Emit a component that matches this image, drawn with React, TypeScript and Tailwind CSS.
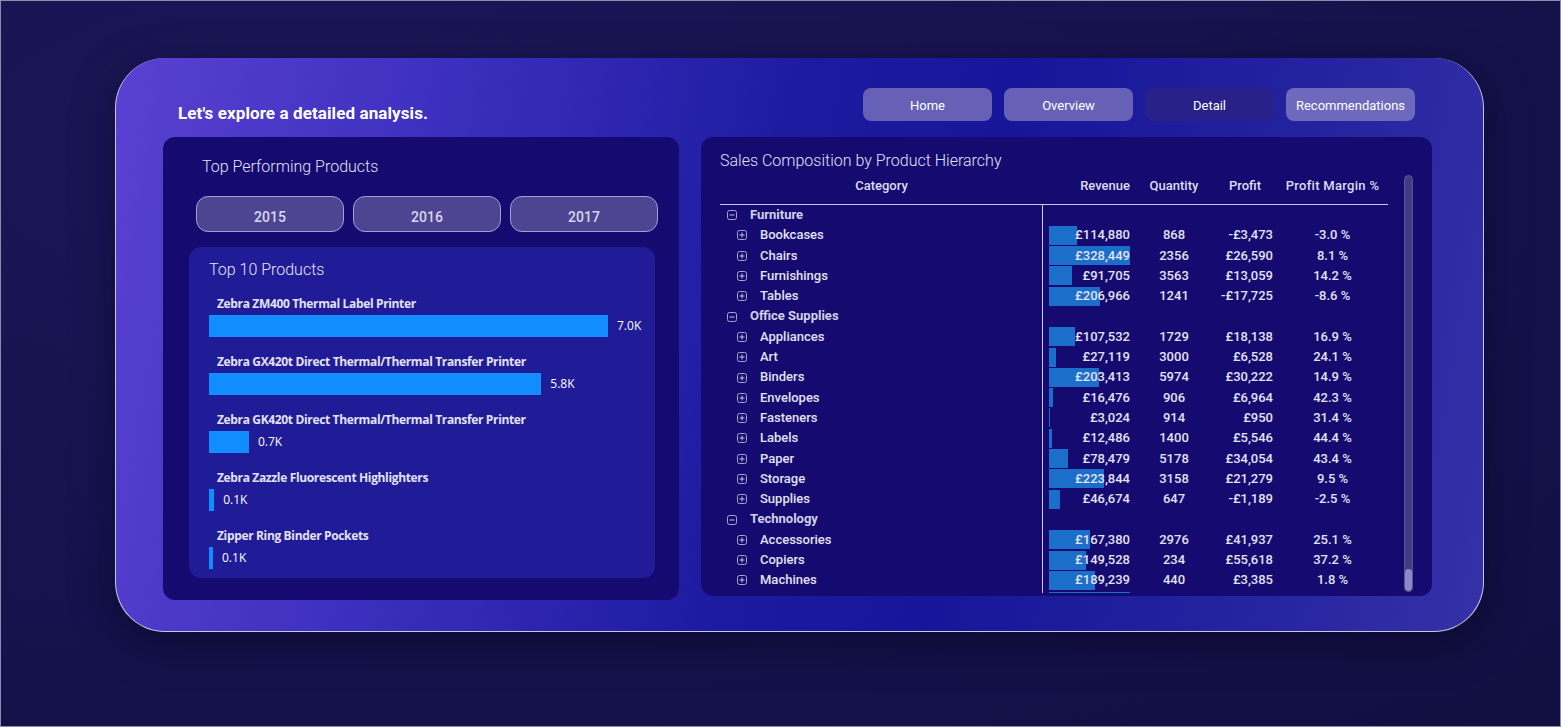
import React from 'react';

const NAV = ['Home', 'Overview', 'Detail', 'Recommendations'] as const;
const YEARS = ['2015', '2016', '2017'];

const TOP_PRODUCTS = [
  { name: 'Zebra ZM400 Thermal Label Printer', value: 7.0 },
  { name: 'Zebra GX420t Direct Thermal/Thermal Transfer Printer', value: 5.83 },
  { name: 'Zebra GK420t Direct Thermal/Thermal Transfer Printer', value: 0.7 },
  { name: 'Zebra Zazzle Fluorescent Highlighters', value: 0.09 },
  { name: 'Zipper Ring Binder Pockets', value: 0.07 }
];

type Row = { name: string; rev?: number; qty?: string; profit?: string; margin?: string; group?: boolean };

const ROWS: Row[] = [
  { name: 'Furniture', group: true },
  { name: 'Bookcases', rev: 114880, qty: '868', profit: '-£3,473', margin: '-3.0 %' },
  { name: 'Chairs', rev: 328449, qty: '2356', profit: '£26,590', margin: '8.1 %' },
  { name: 'Furnishings', rev: 91705, qty: '3563', profit: '£13,059', margin: '14.2 %' },
  { name: 'Tables', rev: 206966, qty: '1241', profit: '-£17,725', margin: '-8.6 %' },
  { name: 'Office Supplies', group: true },
  { name: 'Appliances', rev: 107532, qty: '1729', profit: '£18,138', margin: '16.9 %' },
  { name: 'Art', rev: 27119, qty: '3000', profit: '£6,528', margin: '24.1 %' },
  { name: 'Binders', rev: 203413, qty: '5974', profit: '£30,222', margin: '14.9 %' },
  { name: 'Envelopes', rev: 16476, qty: '906', profit: '£6,964', margin: '42.3 %' },
  { name: 'Fasteners', rev: 3024, qty: '914', profit: '£950', margin: '31.4 %' },
  { name: 'Labels', rev: 12486, qty: '1400', profit: '£5,546', margin: '44.4 %' },
  { name: 'Paper', rev: 78479, qty: '5178', profit: '£34,054', margin: '43.4 %' },
  { name: 'Storage', rev: 223844, qty: '3158', profit: '£21,279', margin: '9.5 %' },
  { name: 'Supplies', rev: 46674, qty: '647', profit: '-£1,189', margin: '-2.5 %' },
  { name: 'Technology', group: true },
  { name: 'Accessories', rev: 167380, qty: '2976', profit: '£41,937', margin: '25.1 %' },
  { name: 'Copiers', rev: 149528, qty: '234', profit: '£55,618', margin: '37.2 %' },
  { name: 'Machines', rev: 189239, qty: '440', profit: '£3,385', margin: '1.8 %' }
];

const REV_MAX = 330007;

function fmt(n: number): string {
  return '£' + n.toLocaleString('en-GB');
}

function ToggleBox({ open }: { open: boolean }) {
  return (
    <svg width="10" height="10" viewBox="0 0 10 10" fill="none" className="shrink-0">
      <rect x="0.5" y="0.5" width="9" height="9" rx="2" stroke="#a9a6cc" />
      <path d="M2.5 5h5" stroke="#c4c2de" />
      {!open && <path d="M5 2.5v5" stroke="#c4c2de" />}
    </svg>
  );
}

function TopProducts() {
  return (
    <section className="w-[516px] h-[463px] shrink-0 rounded-xl bg-[#150a70] flex flex-col">
      <h2 className="pl-[39px] pt-[19px] text-[16px] leading-[22px] font-light text-[#e2e1f2]">
        Top Performing Products
      </h2>
      <div className="mt-[18px] pl-[33px] flex gap-[9px]">
        {YEARS.map((y) => (
          <button
            key={y}
            className="w-[148px] h-[36px] rounded-xl border border-[#a39ed6] bg-[#4e4592] pt-[7px] text-[14px] font-medium text-[#d9d8ea]"
          >
            {y}
          </button>
        ))}
      </div>
      <div className="mt-[15px] ml-[26px] w-[466px] h-[331px] rounded-xl bg-[#201c98] pl-[20px]">
        <h3 className="pt-[12px] text-[16px] leading-[22px] font-light text-[#e6e5f4]">Top 10 Products</h3>
        <div className="mt-[15px] flex flex-col gap-[17px]">
          {TOP_PRODUCTS.map((p) => (
            <div key={p.name} className="flex flex-col gap-[3px]">
              <div className="pl-[8px] h-[16px] leading-[16px] text-[12px] font-bold tracking-[-0.35px] text-[#e3e2f2] font-['Open_Sans',sans-serif]">
                {p.name}
              </div>
              <div className="flex items-center h-[22px]">
                <div className="h-[22px] bg-[#118dff]" style={{ width: Math.max(4, (p.value / 7) * 399) }} />
                <span className="ml-[9px] text-[12px] text-white font-['Open_Sans',sans-serif]">
                  {p.value < 0.15 ? '0.1' : p.value.toFixed(1)}K
                </span>
              </div>
            </div>
          ))}
        </div>
      </div>
    </section>
  );
}

function HierarchyTable() {
  const grid = 'grid grid-cols-[323px_92px_78px_64px_111px]';
  return (
    <section className="w-[731px] h-[459px] shrink-0 rounded-xl bg-[#150a70] px-[19px] flex gap-[16px]">
      <div className="flex-1 flex flex-col">
        <h2 className="pt-[13px] text-[16px] leading-[22px] font-light text-[#e2e1f2]">
          Sales Composition by Product Hierarchy
        </h2>
        <div className={`${grid} mt-[4px] h-[29px] border-b border-[#c9c7e4] text-[13px] leading-[20px] font-medium text-[#dedcf0]`}>
          <div className="text-center">Category</div>
          <div className="text-right pr-[5px]">Revenue</div>
          <div className="text-center">Quantity</div>
          <div className="text-center">Profit</div>
          <div className="text-center tracking-[0.3px]">Profit Margin %</div>
        </div>
        <div className="h-[388px] overflow-hidden">
          {ROWS.map((r) => (
            <div key={r.name} className={`${grid} h-[20.3px] text-[13px] leading-[20.3px] font-medium text-[#e3e2f1]`}>
              <div className={`flex items-center border-r border-[#c9c7e4] ${r.group ? 'pl-[7px]' : 'pl-[17px]'} gap-[13px]`}>
                <ToggleBox open={!!r.group} />
                <span className={r.group ? 'font-bold text-[#d3d1e8]' : ''}>{r.name}</span>
              </div>
              <div className="relative text-right pr-[5px]">
                {r.rev !== undefined && (
                  <>
                    <div
                      className="absolute left-[6px] top-[0.5px] h-[19px] bg-[#1b6fca]"
                      style={{ width: (r.rev / REV_MAX) * 81 }}
                    />
                    <span className="relative">{fmt(r.rev)}</span>
                  </>
                )}
              </div>
              <div className="text-center">{r.qty}</div>
              <div className="text-right pr-[4px]">{r.profit}</div>
              <div className="text-center">{r.margin}</div>
            </div>
          ))}
          <div className={`${grid} h-[3px]`}>
            <div className="border-r border-[#c9c7e4]" />
            <div className="pl-[6px] pt-[1px]">
              <div className="h-[2px] w-[81px] bg-[#1b6fca]" />
            </div>
          </div>
        </div>
      </div>
      <div className="mt-[38px] w-[9px] h-[417px] rounded-full bg-[#433c7e] border border-[#5a539a] flex flex-col justify-end overflow-hidden">
        <div className="h-[22px] rounded-full bg-[#8f88c6]" />
      </div>
    </section>
  );
}

export default function App() {
  return (
    <div className="w-[1561px] h-[727px] overflow-hidden border border-[#8d8bab] bg-[radial-gradient(ellipse_at_20%_20%,#1b1758_0%,#16134f_50%,#120f42_100%)] font-['Roboto',sans-serif]">
      <div className="ml-[114px] mt-[57px] w-[1369px] h-[574px] rounded-[50px] border-x-[1.5px] border-b-[1.5px] border-t-0 border-[#c9c7e6] bg-[linear-gradient(100deg,#5a41d1_0%,#3d30c0_22%,#1c1a9f_48%,#17169a_62%,#2724a0_85%,#3531a8_100%)] shadow-[0_12px_40px_rgba(5,3,30,0.55)] pl-[47px] pt-[30px] flex flex-col">
        <header className="flex items-start h-[33px]">
          <h1 className="ml-[15px] mt-[15px] text-[17px] leading-[20px] font-bold text-white tracking-[0.1px]">
            Let's explore a detailed analysis.
          </h1>
          <nav className="ml-auto mr-[68px] flex gap-[12px]">
            {NAV.map((n) => (
              <button
                key={n}
                className={[
                  'w-[129px] h-[33px] rounded-lg pt-[3px] text-[13px] text-white',
                  n === 'Detail'
                    ? 'bg-[#272189]'
                    : n === 'Recommendations'
                    ? 'bg-[#6d69bd]'
                    : 'bg-[#6661b7]'
                ].join(' ')}
              >
                {n}
              </button>
            ))}
          </nav>
        </header>
        <div className="mt-[16px] flex items-start gap-[22px]">
          <TopProducts />
          <HierarchyTable />
        </div>
      </div>
    </div>
  );
}
